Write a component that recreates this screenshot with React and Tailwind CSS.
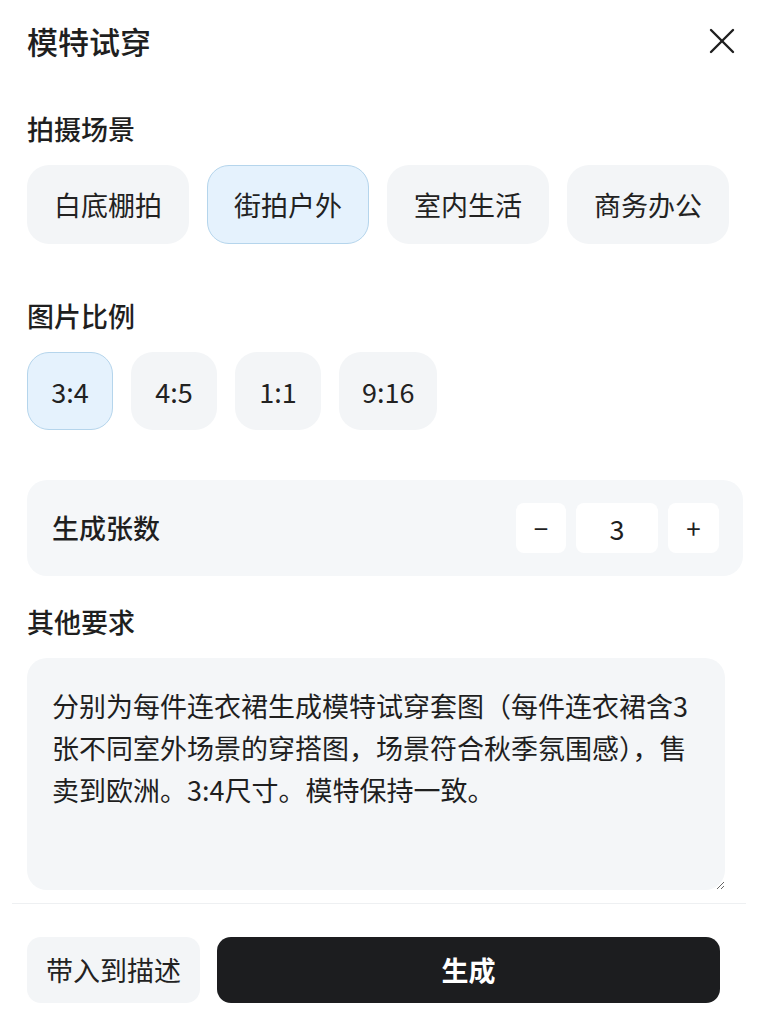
import React, { useState } from 'react';

const FONT = '"Noto Sans CJK SC", "Noto Sans", sans-serif';

const scenes = ['白底棚拍', '街拍户外', '室内生活', '商务办公'];
const ratios = ['3:4', '4:5', '1:1', '9:16'];

const chipBase = 'rounded-[22px] border-[1.5px] text-[27px] leading-none text-[#222] flex items-center justify-center';
const chipOff = 'bg-[#f3f5f7] border-transparent';
const chipOn = 'bg-[#e5f2fd] border-[#b5d5ec]';

const CloseIcon = () => (
  <svg width="26" height="26" viewBox="0 0 26 26" fill="none" stroke="#1f1f1f" strokeWidth="2.4" strokeLinecap="round">
    <path d="M2 2 24 24" />
    <path d="M24 2 2 24" />
  </svg>
);

const App = () => {
  const [scene, setScene] = useState('街拍户外');
  const [ratio, setRatio] = useState('3:4');
  const [count, setCount] = useState(3);

  return (
    <div className="w-[758px] h-[1033px] bg-white text-[#1f1f1f] overflow-hidden" style={{ fontFamily: FONT }}>
      <div className="px-[27px]">
        {/* header */}
        <div className="pt-[22px] flex items-center justify-between">
          <h1 className="text-[31px] leading-[38px] font-medium">模特试穿</h1>
          <button className="mr-[-4px] p-0">
            <CloseIcon />
          </button>
        </div>

        {/* scene */}
        <h2 className="mt-[52px] text-[27px] leading-[34px] font-medium">拍摄场景</h2>
        <div className="mt-[19px] flex gap-[18px]">
          {scenes.map((s) => (
            <button
              key={s}
              onClick={() => setScene(s)}
              className={`${chipBase} w-[162px] h-[79px] ${scene === s ? chipOn : chipOff}`}
            >
              {s}
            </button>
          ))}
        </div>

        {/* ratio */}
        <h2 className="mt-[55px] text-[27px] leading-[34px] font-medium">图片比例</h2>
        <div className="mt-[19px] flex gap-[18px]">
          {ratios.map((r) => (
            <button
              key={r}
              onClick={() => setRatio(r)}
              className={`${chipBase} min-w-[86px] px-[22px] h-[78px] ${ratio === r ? chipOn : chipOff}`}
            >
              {r}
            </button>
          ))}
        </div>

        {/* count */}
        <div className="mt-[50px] mr-[-12px] h-[96px] rounded-[20px] bg-[#f5f7f9] flex items-center justify-between pl-[25px] pr-[24px]">
          <span className="text-[27px] font-medium">生成张数</span>
          <div className="flex items-center gap-[10px]">
            <button
              onClick={() => setCount(Math.max(1, count - 1))}
              className="w-[50px] h-[50px] rounded-[8px] bg-white flex items-center justify-center text-[26px] leading-none"
            >
              −
            </button>
            <div className="w-[82px] h-[50px] rounded-[8px] bg-white flex items-center justify-center text-[27px] leading-none">
              {count}
            </div>
            <button
              onClick={() => setCount(count + 1)}
              className="w-[51px] h-[50px] rounded-[8px] bg-white flex items-center justify-center text-[26px] leading-none"
            >
              +
            </button>
          </div>
        </div>

        {/* extra requirements */}
        <h2 className="mt-[29px] text-[27px] leading-[34px] font-medium">其他要求</h2>
        <textarea
          className="mt-[19px] block w-[698px] h-[232px] rounded-[20px] bg-[#f4f6f8] pl-[25px] pr-[20px] pt-[27px] text-[27px] leading-[42px] text-[#1f1f1f] outline-none"
          style={{ fontFamily: FONT }}
          defaultValue="分别为每件连衣裙生成模特试穿套图（每件连衣裙含3张不同室外场景的穿搭图，场景符合秋季氛围感），售卖到欧洲。3:4尺寸。模特保持一致。"
        />
      </div>

      {/* footer */}
      <div className="mt-[13px] mx-[12px] h-px bg-[#eef0f2]" />
      <div className="px-[27px] pt-[33px] flex gap-[17px]">
        <button className="w-[173px] h-[66px] rounded-[14px] bg-[#f3f5f7] text-[27px] text-[#222]">带入到描述</button>
        <button className="w-[503px] h-[66px] rounded-[14px] bg-[#1c1d1f] text-[27px] font-bold text-white">生成</button>
      </div>
    </div>
  );
};

export default App;
